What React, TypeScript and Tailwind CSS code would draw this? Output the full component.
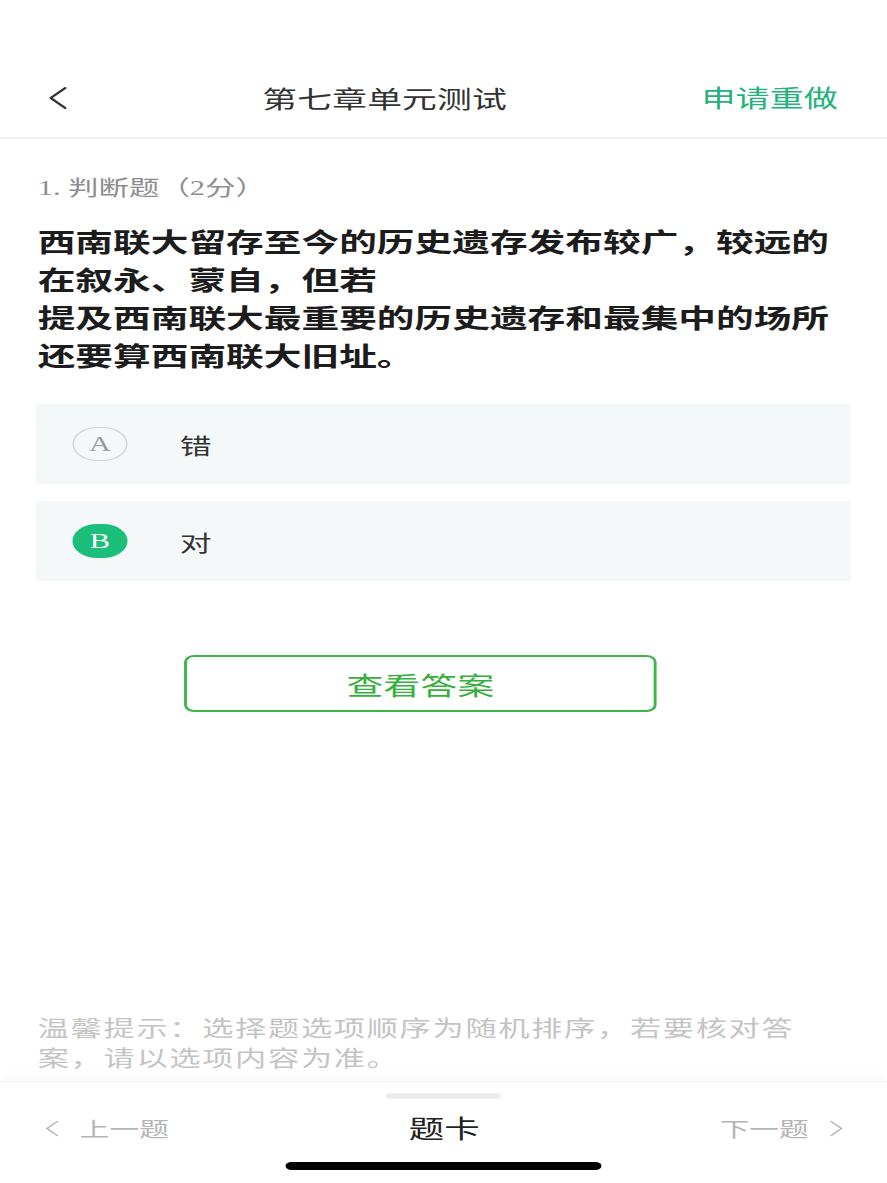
import React from "react";

const CJK = "font-['Noto_Sans_CJK_SC','Noto_Sans',sans-serif]";

function Chevron({ dir, className }: { dir: "left" | "right"; className?: string }) {
  return (
    <svg viewBox="0 0 14 24" className={className} fill="none">
      {dir === "left" ? (
        <polyline points="12,2 2,12 12,22" stroke="currentColor" strokeWidth="1.8" strokeLinecap="round" strokeLinejoin="round" />
      ) : (
        <polyline points="2,2 12,12 2,22" stroke="currentColor" strokeWidth="1.8" strokeLinecap="round" strokeLinejoin="round" />
      )}
    </svg>
  );
}

function Option({ letter, text, selected }: { letter: string; text: string; selected?: boolean }) {
  return (
    <div className="flex h-[80px] items-center bg-[#f4f8f8] pl-[25px]">
      <div
        className={
          selected
            ? "flex h-[34px] w-[38px] items-center justify-center rounded-full bg-[#1cbf79] text-white"
            : "flex h-[34px] w-[38px] items-center justify-center rounded-full border-[1.5px] border-[#d4d4d4] text-[#9a9a9a]"
        }
      >
        <span className="font-['Liberation_Serif',serif] text-[21px] leading-none">{letter}</span>
      </div>
      <span className={`${CJK} ml-[36px] text-[22px] leading-none text-[#333333]`}>{text}</span>
    </div>
  );
}

export default function App() {
  return (
    <div className="h-[1183px] w-[887px] overflow-hidden bg-white">
      <div className={`${CJK} flex h-[1183px] w-[612px] origin-top-left scale-x-[1.4494] flex-col`}>
        {/* header */}
        <div className="mt-[60px] flex h-[79px] items-center border-b-2 border-[#f2f2f2] pb-[2px]">
          <div className="ml-[33px] flex w-[148px]">
            <Chevron dir="left" className="h-[24px] w-[14px] text-[#333333]" />
          </div>
          <div className="w-[170px] text-[24px] leading-none tracking-[0.1px] text-[#333333]">第七章单元测试</div>
          <div className="ml-auto mr-[34px] text-[23.5px] leading-none text-[#22b27c]">申请重做</div>
        </div>

        {/* label */}
        <div className="mt-[34px] px-[26px] text-[21px] leading-[26px] text-[#8e8e8e]">
          <span className="font-['Liberation_Serif','Noto_Sans_CJK_SC',serif]">1. </span>
          判断题（<span className="font-['Liberation_Serif',serif]">2</span>分）
        </div>

        {/* question */}
        <div className="mt-[21px] whitespace-nowrap px-[26px] text-[26px] font-bold leading-[38px] text-[#1c1c1c]">
          西南联大留存至今的历史遗存发布较广，较远的
          <br />
          在叙永、蒙自，但若
          <br />
          提及西南联大最重要的历史遗存和最集中的场所
          <br />
          还要算西南联大旧址。
        </div>

        {/* options */}
        <div className="mx-[25px] mt-[30px] flex flex-col gap-[17px]">
          <Option letter="A" text="错" />
          <Option letter="B" text="对" selected />
        </div>

        {/* button */}
        <div className="ml-[127px] mt-[74px] flex h-[57px] w-[326px] items-center justify-center rounded-[7px] border-2 border-[#3cb54a]">
          <span className="text-[25.5px] leading-none text-[#36b03c]">查看答案</span>
        </div>

        {/* hint */}
        <div className="mt-auto whitespace-nowrap px-[26px] text-[21.5px] leading-[30px] tracking-[1.2px] text-[#c4c4c4]">
          温馨提示：选择题选项顺序为随机排序，若要核对答
          <br />
          案，请以选项内容为准。
        </div>

        {/* bottom bar */}
        <div className="mt-[9px] flex h-[102px] flex-col items-center border-t border-[#f3f3f3] bg-white shadow-[0_-6px_10px_rgba(0,0,0,0.025)]">
          <div className="mt-[11px] h-[6px] w-[80px] rounded-full bg-[#ececec]" />
          <div className="mt-[11px] flex h-[36px] w-full items-center">
            <div className="ml-[31px] flex w-[120px] items-center text-[#b5b5b5]">
              <Chevron dir="left" className="h-[19px] w-[10px]" />
              <span className="ml-[14px] text-[20.5px] leading-none">上一题</span>
            </div>
            <div className="flex-1 text-center text-[24.5px] leading-none text-[#222222]">题卡</div>
            <div className="mr-[30px] flex w-[120px] items-center justify-end text-[#b5b5b5]">
              <span className="mr-[14px] text-[20.5px] leading-none">下一题</span>
              <Chevron dir="right" className="h-[19px] w-[10px]" />
            </div>
          </div>
          <div className="mt-[16px] h-[8px] w-[218px] rounded-full bg-black" />
        </div>
      </div>
    </div>
  );
}
